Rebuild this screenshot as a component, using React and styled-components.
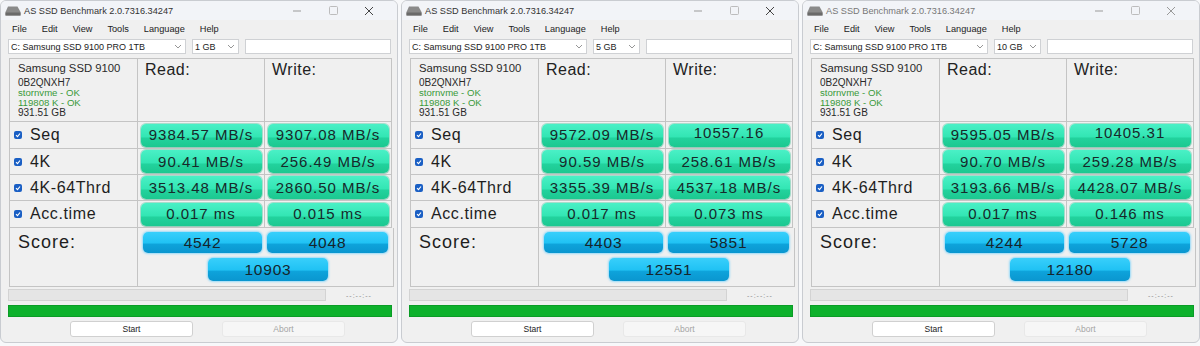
import styled, { createGlobalStyle } from "styled-components";

const GlobalStyle = createGlobalStyle`
  html, body { margin: 0; padding: 0; background: #ffffff; }
  body { width: 1200px; height: 346px; overflow: hidden; }
`;

const Screen = styled.div`
  display: flex;
  gap: 3px;
  width: 1200px;
  height: 346px;
  background: #f7f8fa;
`;

const Window = styled.div`
  width: 398px;
  height: 343px;
  flex-shrink: 0;
  box-sizing: border-box;
  border: 1px solid #c9ccd1;
  border-radius: 6px;
  background: #f0f0f0;
  display: flex;
  flex-direction: column;
  overflow: hidden;
  font-family: "Liberation Sans", Arial, sans-serif;
  color: #1b1b1b;
`;

const TitleBar = styled.div`
  height: 19px;
  display: flex;
  align-items: center;
  padding-left: 4px;
  background: #f2f4f8;
  font-size: 9.2px;
  color: ${(p) => (p.inactive ? "#777" : "#333")};
`;

const TitleText = styled.span`
  margin-left: 3px;
  flex: 1;
`;

const Controls = styled.div`
  display: flex;
  align-items: center;
  margin-right: 10px;
`;

const CtrlBtn = styled.div`
  width: ${(p) => p.w}px;
  display: flex;
  justify-content: center;
  align-items: center;
  color: ${(p) => p.color};
`;

const MenuBar = styled.div`
  height: 17px;
  display: flex;
  align-items: center;
  padding-left: 11px;
  gap: 15px;
  font-size: 9.2px;
  color: #222;
`;

const ComboRow = styled.div`
  display: flex;
  align-items: center;
  gap: 6px;
  height: 15px;
  margin-top: 2px;
  padding-left: 7px;
`;

const Combo = styled.div`
  width: ${(p) => p.w}px;
  height: 15px;
  box-sizing: border-box;
  border: 1px solid #cfd1d4;
  background: #ffffff;
  display: flex;
  align-items: center;
  justify-content: space-between;
  padding: 0 3px 0 2px;
  font-size: 9px;
  color: #222;
`;

const Grid = styled.div`
  margin: 4px 0 0 8px;
  width: 383px;
  box-sizing: border-box;
  display: grid;
  grid-template-columns: 128px 127px 127px;
  grid-template-rows: 63px 27px 26px 26px 27px;
  border-left: 1px solid #c4c4c4;
  border-top: 1px solid #c4c4c4;
`;

const Cell = styled.div`
  border-right: 1px solid #c4c4c4;
  border-bottom: 1px solid #c4c4c4;
  display: flex;
  align-items: center;
  justify-content: ${(p) => (p.center ? "center" : "flex-start")};
  padding: ${(p) => p.pad || "0"};
  min-width: 0;
  overflow: hidden;
`;

const InfoCell = styled.div`
  border-right: 1px solid #c4c4c4;
  border-bottom: 1px solid #c4c4c4;
  padding: 2px 0 0 8px;
  display: flex;
  flex-direction: column;
`;

const DriveName = styled.div`
  font-size: 11.3px;
  line-height: 14px;
  color: #2a2a2a;
`;

const InfoLine = styled.div`
  font-size: ${(p) => (p.ok ? "9.6px" : "10px")};
  line-height: 10px;
  margin-top: ${(p) => (p.first ? "3px" : "0")};
  color: ${(p) => (p.ok ? "#3a9a3a" : "#2a2a2a")};
`;

const HeadCell = styled.div`
  border-right: 1px solid #c4c4c4;
  border-bottom: 1px solid #c4c4c4;
  padding: 1px 0 0 7px;
  font-size: 16px;
  letter-spacing: 0.5px;
  line-height: 20px;
  color: #222;
`;

const Check = styled.span`
  width: 8px;
  height: 8px;
  border-radius: 2px;
  background: #1a5fc4;
  display: inline-flex;
  align-items: center;
  justify-content: center;
  margin-right: 8px;
  flex-shrink: 0;
`;

const Label = styled.span`
  font-size: 16px;
  letter-spacing: 0.6px;
  color: #1e1e1e;
`;

const ValuePill = styled.div`
  width: 121px;
  height: 23px;
  box-sizing: border-box;
  border-radius: 5px;
  background: linear-gradient(
    to bottom,
    #4af0c6 0%,
    #33e6b4 55%,
    #22d29d 62%,
    #1cc890 100%
  );
  box-shadow: 0 0 0 1px rgba(28, 185, 135, 0.35), 0 1px 1px rgba(0, 0, 0, 0.12);
  display: flex;
  align-items: ${(p) => (p.high ? "flex-start" : "center")};
  justify-content: center;
  padding-top: ${(p) => (p.high ? "1px" : "0")};
  font-size: 15px;
  line-height: 16px;
  letter-spacing: 1px;
  color: #17292a;
`;

const ScoreBox = styled.div`
  margin: 0 0 0 8px;
  width: 383px;
  height: 59px;
  box-sizing: border-box;
  display: grid;
  grid-template-columns: 128px 254px;
  border-left: 1px solid #c4c4c4;
`;

const ScoreLabel = styled.div`
  border-right: 1px solid #c4c4c4;
  border-bottom: 1px solid #c4c4c4;
  padding: 4px 0 0 8px;
  font-size: 18px;
  letter-spacing: 1px;
  color: #1e1e1e;
`;

const ScoreArea = styled.div`
  border-right: 1px solid #c4c4c4;
  border-bottom: 1px solid #c4c4c4;
  padding: 4px 0 0 5px;
  display: flex;
  flex-direction: column;
  width: 250px;
`;

const ScoreRow = styled.div`
  display: flex;
  gap: 5px;
`;

const ScorePill = styled.div`
  width: ${(p) => p.w}px;
  height: ${(p) => p.h}px;
  border-radius: 5px;
  background: linear-gradient(
    to bottom,
    #38cffb 0%,
    #20c2f4 52%,
    #0ea3db 58%,
    #0a96cf 100%
  );
  box-shadow: 0 0 2px 1px rgba(80, 200, 255, 0.55);
  display: flex;
  align-items: center;
  justify-content: center;
  font-size: 15.5px;
  letter-spacing: 0.8px;
  color: #15252c;
  align-self: ${(p) => (p.total ? "center" : "auto")};
  margin-top: ${(p) => (p.total ? "5px" : "0")};
`;

const ProgressRow = styled.div`
  display: flex;
  align-items: center;
  height: 12px;
  margin: 2px 0 0 7px;
`;

const Track = styled.div`
  width: 318px;
  height: 12px;
  box-sizing: border-box;
  border: 1px solid #d3d3d3;
  background: #e5e5e5;
`;

const TimeText = styled.span`
  margin-left: 20px;
  font-size: 7px;
  letter-spacing: 1px;
  color: #8c8c8c;
`;

const DoneBar = styled.div`
  margin: 4px 0 0 7px;
  width: 384px;
  height: 12px;
  box-sizing: border-box;
  background: #0db12c;
  border: 1px solid #0a9c26;
`;

const ButtonRow = styled.div`
  display: flex;
  gap: 29px;
  margin-top: 4px;
  padding-left: 69px;
`;

const Button = styled.div`
  width: 123px;
  height: 16px;
  box-sizing: border-box;
  border-radius: 3px;
  border: 1px solid ${(p) => (p.disabled ? "#e8e8e8" : "#d0d0d0")};
  background: ${(p) => (p.disabled ? "#f6f6f6" : "#ffffff")};
  color: ${(p) => (p.disabled ? "#a5a5a5" : "#222")};
  font-size: 8.5px;
  display: flex;
  align-items: center;
  justify-content: center;
`;

const DriveIcon = () => (
  <svg width="16" height="10" viewBox="0 0 16 10">
    <path d="M3 0.5 H12.5 L15.5 6 V9.5 H0.5 V6 Z" fill="#8a8a8a" />
    <rect x="0.5" y="6.5" width="15" height="3" fill="#6a6a6a" />
  </svg>
);

const Chevron = () => (
  <svg width="8" height="5" viewBox="0 0 8 5">
    <path d="M1 1 L4 4 L7 1" fill="none" stroke="#8a8a8a" strokeWidth="0.9" />
  </svg>
);

const Tick = () => (
  <svg width="6" height="6" viewBox="0 0 6 6">
    <path d="M1 3.2 L2.5 4.6 L5 1.5" fill="none" stroke="#fff" strokeWidth="1.1" />
  </svg>
);

function BenchWindow({ size, rows, scores, inactive }) {
  return (
    <Window>
      <TitleBar inactive={inactive}>
        <DriveIcon />
        <TitleText>AS SSD Benchmark 2.0.7316.34247</TitleText>
        <Controls>
          <CtrlBtn w={36} color="#9a9a9a">
            <svg width="8" height="2" viewBox="0 0 8 2">
              <rect x="0" y="0.5" width="8" height="1" fill="currentColor" />
            </svg>
          </CtrlBtn>
          <CtrlBtn w={36} color="#b5b5b5">
            <svg width="9" height="9" viewBox="0 0 9 9">
              <rect x="0.5" y="0.5" width="8" height="8" rx="1" fill="none" stroke="currentColor" strokeWidth="0.9" />
            </svg>
          </CtrlBtn>
          <CtrlBtn w={36} color={inactive ? "#999" : "#444"}>
            <svg width="10" height="10" viewBox="0 0 10 10">
              <path d="M1 1 L9 9 M9 1 L1 9" stroke="currentColor" strokeWidth="1" />
            </svg>
          </CtrlBtn>
        </Controls>
      </TitleBar>

      <MenuBar>
        <span>File</span>
        <span>Edit</span>
        <span>View</span>
        <span>Tools</span>
        <span>Language</span>
        <span>Help</span>
      </MenuBar>

      <ComboRow>
        <Combo w={178}>
          <span>C: Samsung SSD 9100 PRO 1TB</span>
          <Chevron />
        </Combo>
        <Combo w={47}>
          <span>{size}</span>
          <Chevron />
        </Combo>
        <Combo w={146} />
      </ComboRow>

      <Grid>
        <InfoCell>
          <DriveName>Samsung SSD 9100</DriveName>
          <InfoLine first>0B2QNXH7</InfoLine>
          <InfoLine ok>stornvme - OK</InfoLine>
          <InfoLine ok>119808 K - OK</InfoLine>
          <InfoLine>931.51 GB</InfoLine>
        </InfoCell>
        <HeadCell>Read:</HeadCell>
        <HeadCell>Write:</HeadCell>

        {rows.map((r) => [
          <Cell key={r.name + "l"} pad="0 0 0 4px">
            <Check>
              <Tick />
            </Check>
            <Label>{r.name}</Label>
          </Cell>,
          <Cell key={r.name + "r"} center>
            <ValuePill>{r.read}</ValuePill>
          </Cell>,
          <Cell key={r.name + "w"} center>
            <ValuePill high={r.high}>{r.write}</ValuePill>
          </Cell>,
        ])}
      </Grid>

      <ScoreBox>
        <ScoreLabel>Score:</ScoreLabel>
        <ScoreArea>
          <ScoreRow>
            <ScorePill w={119} h={21}>{scores[0]}</ScorePill>
            <ScorePill w={121} h={21}>{scores[1]}</ScorePill>
          </ScoreRow>
          <ScorePill total w={120} h={23}>{scores[2]}</ScorePill>
        </ScoreArea>
      </ScoreBox>

      <ProgressRow>
        <Track />
        <TimeText>--:--:--</TimeText>
      </ProgressRow>
      <DoneBar />

      <ButtonRow>
        <Button>Start</Button>
        <Button disabled>Abort</Button>
      </ButtonRow>
    </Window>
  );
}

const runs = [
  {
    size: "1 GB",
    rows: [
      { name: "Seq", read: "9384.57 MB/s", write: "9307.08 MB/s" },
      { name: "4K", read: "90.41 MB/s", write: "256.49 MB/s" },
      { name: "4K-64Thrd", read: "3513.48 MB/s", write: "2860.50 MB/s" },
      { name: "Acc.time", read: "0.017 ms", write: "0.015 ms" },
    ],
    scores: ["4542", "4048", "10903"],
  },
  {
    size: "5 GB",
    rows: [
      { name: "Seq", read: "9572.09 MB/s", write: "10557.16", high: true },
      { name: "4K", read: "90.59 MB/s", write: "258.61 MB/s" },
      { name: "4K-64Thrd", read: "3355.39 MB/s", write: "4537.18 MB/s" },
      { name: "Acc.time", read: "0.017 ms", write: "0.073 ms" },
    ],
    scores: ["4403", "5851", "12551"],
  },
  {
    size: "10 GB",
    inactive: true,
    rows: [
      { name: "Seq", read: "9595.05 MB/s", write: "10405.31", high: true },
      { name: "4K", read: "90.70 MB/s", write: "259.28 MB/s" },
      { name: "4K-64Thrd", read: "3193.66 MB/s", write: "4428.07 MB/s" },
      { name: "Acc.time", read: "0.017 ms", write: "0.146 ms" },
    ],
    scores: ["4244", "5728", "12180"],
  },
];

export default function App() {
  return (
    <>
      <GlobalStyle />
      <Screen>
        {runs.map((run) => (
          <BenchWindow key={run.size} {...run} />
        ))}
      </Screen>
    </>
  );
}
